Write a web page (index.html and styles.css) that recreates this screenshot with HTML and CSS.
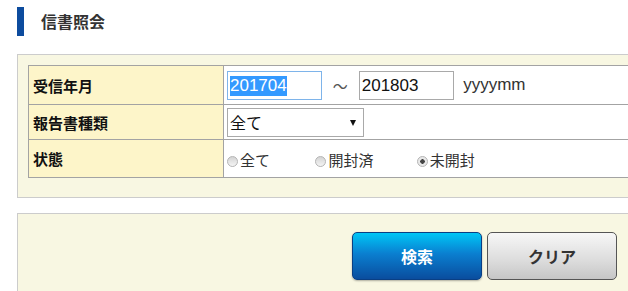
FILE: index.html
```html
<!DOCTYPE html>
<html lang="ja">
<head>
    <meta charset="UTF-8">
    <meta name="viewport" content="width=device-width, initial-scale=1.0">
    <title>信書照会</title>
    <link rel="stylesheet" href="styles.css">
</head>
<body>

    <div class="page">
        <h2 class="page-title">信書照会</h2>

        <div class="search-box">
            <table class="search-table">
                <tr class="row-date">
                    <th>受信年月</th>
                    <td>
                        <input type="text" id="dateFrom" class="text-input" value="201704">
                        <span class="tilde">～</span>
                        <input type="text" class="text-input" value="201803">
                        <span class="hint">yyyymm</span>
                    </td>
                </tr>
                <tr class="row-type">
                    <th>報告書種類</th>
                    <td>
                        <span class="select-wrap">
                            <select class="select-input">
                                <option>全て</option>
                            </select>
                        </span>
                    </td>
                </tr>
                <tr class="row-status">
                    <th>状態</th>
                    <td>
                        <label class="radio-item"><input type="radio" name="status">全て</label>
                        <label class="radio-item"><input type="radio" name="status">開封済</label>
                        <label class="radio-item"><input type="radio" name="status" checked>未開封</label>
                    </td>
                </tr>
            </table>
        </div>

        <div class="button-box">
            <button type="button" class="btn btn-search">検索</button>
            <button type="button" class="btn btn-clear">クリア</button>
        </div>
    </div>

<script>
    window.onload = () => {
        const from = document.getElementById('dateFrom');
        from.focus();
        from.select();
    };
</script>

</body>
</html>
```

FILE: styles.css
```css
/* Global Styles */
body {
    margin: 0;
    padding: 0;
    background-color: #ffffff;
    color: #222;
    font-family: "Noto Sans CJK JP", "Liberation Sans", sans-serif;
    overflow: hidden;
}

.page {
    width: 626px;
    padding: 7px 0 0 17px;
}

.page-title {
    margin: 0 0 18px 0;
    height: 29px;
    line-height: 29px;
    border-left: 7px solid #0d4c9e;
    padding-left: 17px;
    font-size: 16px;
    font-weight: bold;
    color: #333;
}

/* Search conditions */
.search-box {
    background-color: #f8f7e2;
    border: 1px solid #cccccc;
    padding: 10px 10px 19px 10px;
}

.search-table {
    width: 100%;
    border-collapse: collapse;
    border: 1px solid #a3a3a3;
}

.search-table th,
.search-table td {
    border: 1px solid #a3a3a3;
    padding: 0;
    vertical-align: middle;
}

.search-table th {
    width: 190px;
    background-color: #fdf5c9;
    text-align: left;
    padding-left: 4px;
    font-size: 15px;
    font-weight: bold;
    color: #111;
}

.search-table td {
    background-color: #ffffff;
    padding-left: 3px;
    font-size: 15px;
}

.row-date th, .row-date td {
    height: 38px;
}

.row-type th, .row-type td {
    height: 34px;
}

.row-status th, .row-status td {
    height: 37px;
}

.text-input {
    box-sizing: border-box;
    width: 95px;
    height: 29px;
    margin: 0;
    padding: 1px 2px 0 2px;
    border: 1px solid #a9a9a9;
    font-family: "Liberation Sans", sans-serif;
    font-size: 17px;
    color: #111;
    vertical-align: middle;
    outline: none;
}

.text-input:focus {
    border-color: #7eb4ea;
}

.text-input::selection {
    background-color: #3399ff;
    color: #ffffff;
}

.tilde {
    display: inline-block;
    width: 30px;
    text-align: center;
    color: #555;
    font-size: 15px;
    vertical-align: middle;
}

.hint {
    display: inline-block;
    margin-left: 6px;
    font-family: "Liberation Sans", sans-serif;
    font-size: 17px;
    color: #333;
    vertical-align: middle;
}

.select-wrap {
    position: relative;
    display: inline-block;
    vertical-align: middle;
}

.select-wrap::after {
    content: "";
    position: absolute;
    right: 8px;
    top: 12px;
    border-left: 3px solid transparent;
    border-right: 3px solid transparent;
    border-top: 6px solid #111;
    pointer-events: none;
}

.select-input {
    appearance: none;
    -webkit-appearance: none;
    box-sizing: border-box;
    width: 137px;
    height: 29px;
    margin: 0;
    padding: 0 2px;
    border: 1px solid #a9a9a9;
    border-radius: 0;
    background-color: #ffffff;
    font-family: "Noto Sans CJK JP", sans-serif;
    font-size: 16px;
    color: #111;
}

.radio-item {
    display: inline-block;
    color: #333;
    font-size: 15px;
    margin-right: 42px;
    vertical-align: middle;
}

.radio-item:nth-child(2) {
    margin-right: 40px;
}

.radio-item input {
    appearance: none;
    -webkit-appearance: none;
    width: 11px;
    height: 11px;
    margin: 0 2px 0 0;
    border: 1px solid #b5b5b5;
    border-radius: 50%;
    background: linear-gradient(#d4d4d4, #f4f4f4);
    vertical-align: -1px;
}

.radio-item input:checked {
    background: radial-gradient(circle, #444 0 2px, #e8e8e8 2.5px, #e8e8e8);
}

/* Buttons */
.button-box {
    margin-top: 15px;
    height: 80px;
    background-color: #f8f7e2;
    border: 1px solid #cccccc;
    padding: 18px 25px 0 0;
    display: flex;
    justify-content: flex-end;
    align-items: flex-start;
    gap: 5px;
}

.btn {
    width: 130px;
    height: 48px;
    border-radius: 5px;
    font-family: "Noto Sans CJK JP", sans-serif;
    font-size: 16px;
    font-weight: bold;
    cursor: pointer;
}

.btn-search {
    border: 1px solid #0a3f84;
    color: #ffffff;
    background: linear-gradient(#00c6f6, #0a7fd0 45%, #0a4d9e 100%);
    box-shadow: 0 1px 2px rgba(0, 0, 0, 0.3);
}

.btn-clear {
    border: 1px solid #555555;
    color: #333333;
    background: linear-gradient(#f7f7f7, #dcdcdc 60%, #c6c6c6);
}
```
